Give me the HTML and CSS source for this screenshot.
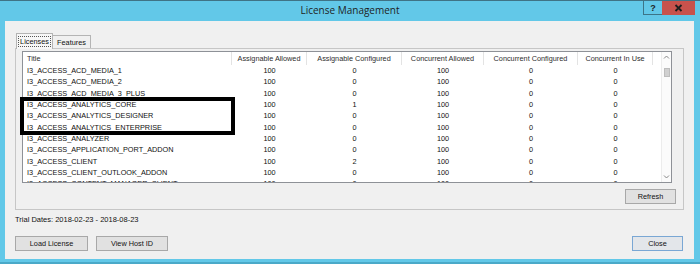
FILE: index.html
```html
<!DOCTYPE html>
<html lang="en">
<head>
    <meta charset="UTF-8">
    <title>License Management</title>
    <link rel="stylesheet" href="styles.css">
</head>
<body>
    <div class="window">
        <div class="titlebar">
            <div class="title">License Management</div>
            <div class="caption-buttons">
                <div class="cap-btn help">?</div>
                <div class="cap-btn close">
                    <svg width="9" height="8" viewBox="0 0 9 8"><path d="M1.5 1 L7.5 7 M7.5 1 L1.5 7" stroke="#1e1e1e" stroke-width="1.8"/></svg>
                </div>
            </div>
        </div>

        <div class="client">
            <div class="tabs">
                <div class="tab tab-licenses active"><span class="focus">Licenses</span></div>
                <div class="tab tab-features">Features</div>
            </div>

            <div class="panel">
                <div class="listview">
                    <div class="lv-grid">
                        <div class="lv-row lv-header">
                            <div class="cell title-cell">Title</div>
                            <div class="cell">Assignable Allowed</div>
                            <div class="cell">Assignable Configured</div>
                            <div class="cell">Concurrent Allowed</div>
                            <div class="cell">Concurrent Configured</div>
                            <div class="cell">Concurrent In Use</div>
                            <div class="cell filler"></div>
                        </div>
                        <div class="lv-row"><div class="cell title-cell">I3_ACCESS_ACD_MEDIA_1</div><div class="cell">100</div><div class="cell">0</div><div class="cell">100</div><div class="cell">0</div><div class="cell">0</div></div>
                        <div class="lv-row"><div class="cell title-cell">I3_ACCESS_ACD_MEDIA_2</div><div class="cell">100</div><div class="cell">0</div><div class="cell">100</div><div class="cell">0</div><div class="cell">0</div></div>
                        <div class="lv-row"><div class="cell title-cell">I3_ACCESS_ACD_MEDIA_3_PLUS</div><div class="cell">100</div><div class="cell">0</div><div class="cell">100</div><div class="cell">0</div><div class="cell">0</div></div>
                        <div class="lv-row"><div class="cell title-cell">I3_ACCESS_ANALYTICS_CORE</div><div class="cell">100</div><div class="cell">1</div><div class="cell">100</div><div class="cell">0</div><div class="cell">0</div></div>
                        <div class="lv-row"><div class="cell title-cell">I3_ACCESS_ANALYTICS_DESIGNER</div><div class="cell">100</div><div class="cell">0</div><div class="cell">100</div><div class="cell">0</div><div class="cell">0</div></div>
                        <div class="lv-row"><div class="cell title-cell">I3_ACCESS_ANALYTICS_ENTERPRISE</div><div class="cell">100</div><div class="cell">0</div><div class="cell">100</div><div class="cell">0</div><div class="cell">0</div></div>
                        <div class="lv-row"><div class="cell title-cell">I3_ACCESS_ANALYZER</div><div class="cell">100</div><div class="cell">0</div><div class="cell">100</div><div class="cell">0</div><div class="cell">0</div></div>
                        <div class="lv-row"><div class="cell title-cell">I3_ACCESS_APPLICATION_PORT_ADDON</div><div class="cell">100</div><div class="cell">0</div><div class="cell">100</div><div class="cell">0</div><div class="cell">0</div></div>
                        <div class="lv-row"><div class="cell title-cell">I3_ACCESS_CLIENT</div><div class="cell">100</div><div class="cell">2</div><div class="cell">100</div><div class="cell">0</div><div class="cell">0</div></div>
                        <div class="lv-row"><div class="cell title-cell">I3_ACCESS_CLIENT_OUTLOOK_ADDON</div><div class="cell">100</div><div class="cell">0</div><div class="cell">100</div><div class="cell">0</div><div class="cell">0</div></div>
                        <div class="lv-row"><div class="cell title-cell">I3_ACCESS_CONTENT_MANAGER_CLIENT</div><div class="cell">100</div><div class="cell">0</div><div class="cell">100</div><div class="cell">0</div><div class="cell">0</div></div>
                    </div>
                    <div class="vscroll">
                        <div class="sb-arrow">
                            <svg width="7" height="5" viewBox="0 0 7 5"><path d="M1 3.5 L3.5 1 L6 3.5" fill="none" stroke="#7a7a7a" stroke-width="0.9"/></svg>
                        </div>
                        <div class="sb-track"><div class="sb-thumb"></div></div>
                        <div class="sb-arrow">
                            <svg width="7" height="5" viewBox="0 0 7 5"><path d="M1 1.5 L3.5 4 L6 1.5" fill="none" stroke="#7a7a7a" stroke-width="0.9"/></svg>
                        </div>
                    </div>
                </div>
                <div class="refresh-row">
                    <button class="btn btn-refresh">Refresh</button>
                </div>
            </div>

            <div class="trial">Trial Dates: 2018-02-23 - 2018-08-23</div>

            <div class="button-row">
                <button class="btn btn-load">Load License</button>
                <button class="btn btn-host">View Host ID</button>
                <button class="btn btn-close">Close</button>
            </div>
        </div>

        <div class="highlight"></div>
    </div>
</body>
</html>
```

FILE: styles.css
```css
body {
    margin: 0;
    font-family: "Liberation Sans", Arial, sans-serif;
    background: #62c8e8;
}

.window {
    width: 700px;
    height: 264px;
    box-sizing: border-box;
    background: #62c8e8;
    border-top: 1px solid #3f7386;
    border-bottom: 2px solid #4aa9c8;
    display: flex;
    flex-direction: column;
    position: relative;
}

/* title bar */
.titlebar {
    height: 20px;
    display: grid;
    grid-template-columns: 1fr auto 1fr;
}

.title {
    grid-column: 2;
    font-family: "Open Sans", "Liberation Sans", sans-serif;
    font-size: 10px;
    line-height: 19px;
    color: #1f1f1f;
}

.caption-buttons {
    grid-column: 3;
    justify-self: end;
    display: flex;
    height: 14px;
    margin-right: 5px;
}

.cap-btn {
    box-sizing: border-box;
    display: flex;
    align-items: center;
    justify-content: center;
}

.help {
    width: 19px;
    border: 1px solid #3c7487;
    border-top: none;
    border-right: none;
    font-family: "Liberation Sans", sans-serif;
    font-weight: bold;
    font-size: 9px;
    color: #1e1e1e;
}

.close {
    width: 33px;
    background: #c8524c;
}

/* client area */
.client {
    margin: 0 6px 3px 5px;
    height: 238px;
    box-sizing: border-box;
    background: #f0f0f0;
    padding: 12px 10px 8px 10px;
    display: flex;
    flex-direction: column;
    font-size: 7.3px;
    color: #111;
}

.tabs {
    display: flex;
    align-items: flex-end;
    height: 15px;
    padding-left: 1px;
}

.tab {
    box-sizing: border-box;
    height: 13px;
    border: 1px solid #b4b4b4;
    border-bottom: none;
    display: flex;
    align-items: center;
    justify-content: center;
    background: #f0f0f0;
}

.tab.active {
    height: 16px;
    margin-bottom: -1px;
    position: relative;
    z-index: 1;
    background: #f7f7f7;
}

.tab-licenses {
    width: 37px;
}

.tab-features {
    width: 38px;
    border-left: none;
}

.focus {
    border: 1px dotted #555;
    padding: 0 1px;
    line-height: 9px;
}

.panel {
    height: 162px;
    box-sizing: border-box;
    border: 1px solid #c6c6c6;
    padding: 2px 7px 0 6px;
    display: flex;
    flex-direction: column;
}

/* list view */
.listview {
    width: 650px;
    height: 132px;
    box-sizing: border-box;
    border: 1px solid #8e9197;
    background: #fff;
    display: flex;
}

.lv-grid {
    width: 639px;
    overflow: hidden;
}

.lv-row {
    display: grid;
    grid-template-columns: 209px 75px 95px 82px 94px 75px 9px;
    height: 11.33px;
    line-height: 11.33px;
    white-space: nowrap;
}

.lv-header {
    height: 13px;
    line-height: 13px;
    color: #2e2e2e;
}

.cell {
    text-align: center;
    overflow: hidden;
}

.title-cell {
    text-align: left;
    padding-left: 4px;
}

.lv-header .cell {
    border-right: 1px solid #e3e3e3;
}

.lv-header .filler {
    border-right: none;
}

.vscroll {
    width: 9px;
    border-left: 1px solid #ececec;
    background: #fbfbfb;
    display: flex;
    flex-direction: column;
}

.sb-arrow {
    height: 11px;
    display: flex;
    align-items: center;
    justify-content: center;
}

.sb-track {
    flex: 1;
    display: flex;
    flex-direction: column;
    align-items: center;
}

.sb-thumb {
    width: 6px;
    height: 9px;
    margin-top: 5px;
    box-sizing: border-box;
    background: #d0d0d0;
    border: 1px solid #bdbdbd;
}

.refresh-row {
    display: flex;
    justify-content: flex-end;
    margin-top: 6px;
}

/* buttons */
.btn {
    box-sizing: border-box;
    height: 15px;
    padding: 0;
    font-family: "Liberation Sans", Arial, sans-serif;
    font-size: 7.3px;
    color: #111;
    background: #e1e1e1;
    border: 1px solid #a8a8a8;
    border-radius: 0;
}

.btn-refresh {
    width: 51px;
}

.trial {
    margin-top: 5px;
    line-height: 10px;
    font-size: 7.5px;
}

.button-row {
    display: flex;
    margin-top: 11px;
}

.btn-load {
    width: 73px;
}

.btn-host {
    width: 72px;
    margin-left: 8px;
}

.btn-close {
    width: 51px;
    margin-left: auto;
    margin-right: 1px;
    border-color: #7aa7d4;
    background: #e3e6ea;
}

/* annotation box drawn over the list */
.highlight {
    position: absolute;
    left: 20px;
    top: 96px;
    width: 215px;
    height: 38px;
    box-sizing: border-box;
    border: 4px solid #000;
}
```
